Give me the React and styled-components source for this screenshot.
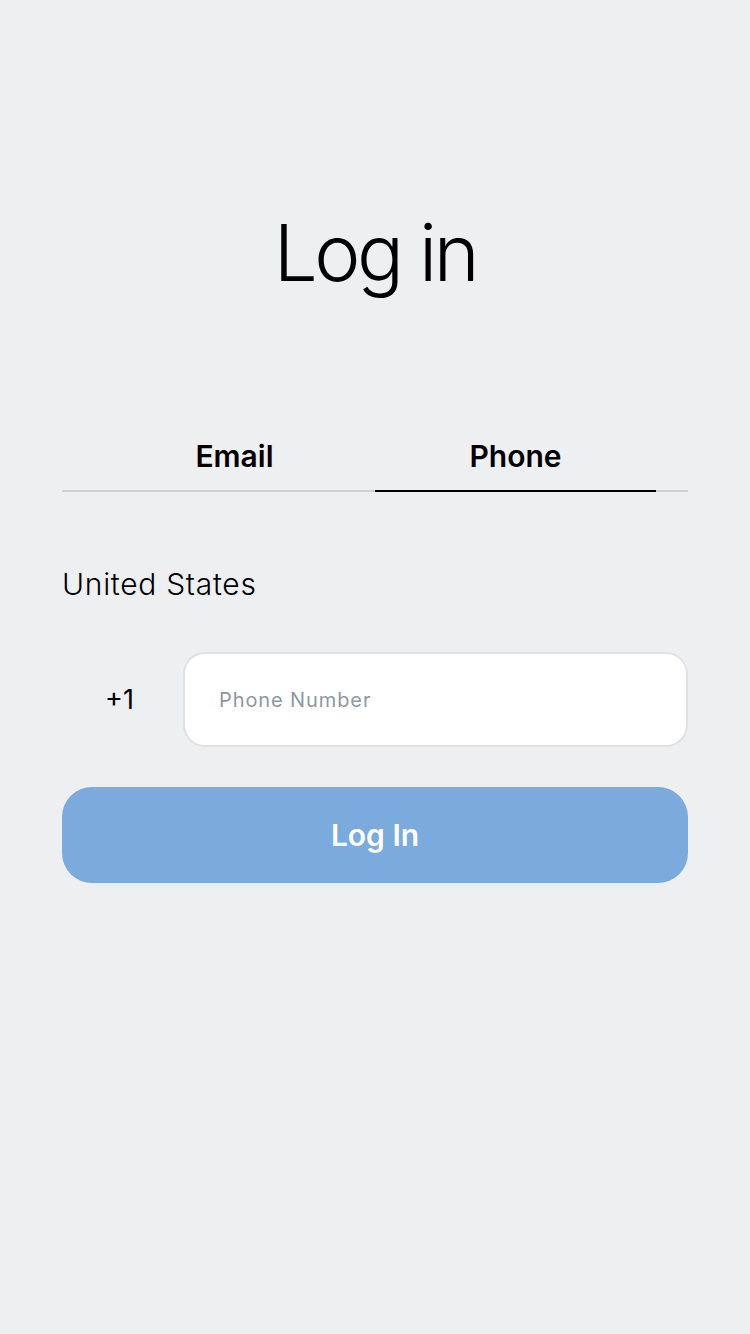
import React, { useState } from 'react';
import styled, { createGlobalStyle } from 'styled-components';

const GlobalStyle = createGlobalStyle`
  html, body {
    margin: 0;
    padding: 0;
    background: #eeeff1;
  }
  body {
    font-family: Inter, "Noto Sans", "Liberation Sans", sans-serif;
    color: #000;
  }
`;

const Page = styled.div`
  min-height: 1334px;
  padding: 0 62px;
  box-sizing: border-box;
  display: flex;
  flex-direction: column;
`;

const Title = styled.h1`
  margin: 206px 0 0;
  font-size: 78px;
  font-weight: 300;
  line-height: 94px;
  letter-spacing: -3.5px;
  text-align: center;
`;

const Tabs = styled.div`
  margin-top: 122px;
  display: flex;
  padding: 0 32px;
  border-bottom: 2px solid #cfd0d3;
`;

const Tab = styled.button`
  flex: 1;
  height: 70px;
  margin-bottom: -2px;
  padding: 0;
  background: none;
  border: none;
  border-bottom: 2px solid ${({ active }) => (active ? '#000' : 'transparent')};
  font-family: inherit;
  font-size: 30px;
  font-weight: 600;
  color: #000;
  cursor: pointer;
`;

const Country = styled.div`
  margin-top: 72px;
  font-size: 30px;
  font-weight: 300;
  letter-spacing: 0.7px;
  line-height: 40px;
`;

const PhoneRow = styled.div`
  margin-top: 48px;
  display: flex;
  align-items: center;
`;

const Code = styled.div`
  width: 115px;
  margin-right: 6px;
  text-align: center;
  font-size: 27px;
  font-weight: 400;
`;

const PhoneInput = styled.input`
  flex: 1;
  height: 95px;
  box-sizing: border-box;
  padding: 0 34px;
  background: #fff;
  border: 2px solid #dfe1e4;
  border-radius: 22px;
  font-family: inherit;
  font-size: 20px;
  letter-spacing: 0.9px;
  color: #000;
  outline: none;
  &::placeholder {
    color: #8f989f;
  }
`;

const SubmitButton = styled.button`
  margin-top: 40px;
  height: 96px;
  border: none;
  border-radius: 30px;
  background: #7aabdc;
  color: #fff;
  font-family: inherit;
  font-size: 30px;
  font-weight: 600;
  cursor: pointer;
`;

const App = () => {
  const [tab, setTab] = useState('phone');
  const [phone, setPhone] = useState('');

  return (
    <>
      <GlobalStyle />
      <Page>
        <Title>Log in</Title>
        <Tabs>
          <Tab active={tab === 'email'} onClick={() => setTab('email')}>Email</Tab>
          <Tab active={tab === 'phone'} onClick={() => setTab('phone')}>Phone</Tab>
        </Tabs>
        <Country>United States</Country>
        <PhoneRow>
          <Code>+1</Code>
          <PhoneInput
            placeholder="Phone Number"
            value={phone}
            onChange={e => setPhone(e.target.value)}
          />
        </PhoneRow>
        <SubmitButton>Log In</SubmitButton>
      </Page>
    </>
  );
};

export default App;
